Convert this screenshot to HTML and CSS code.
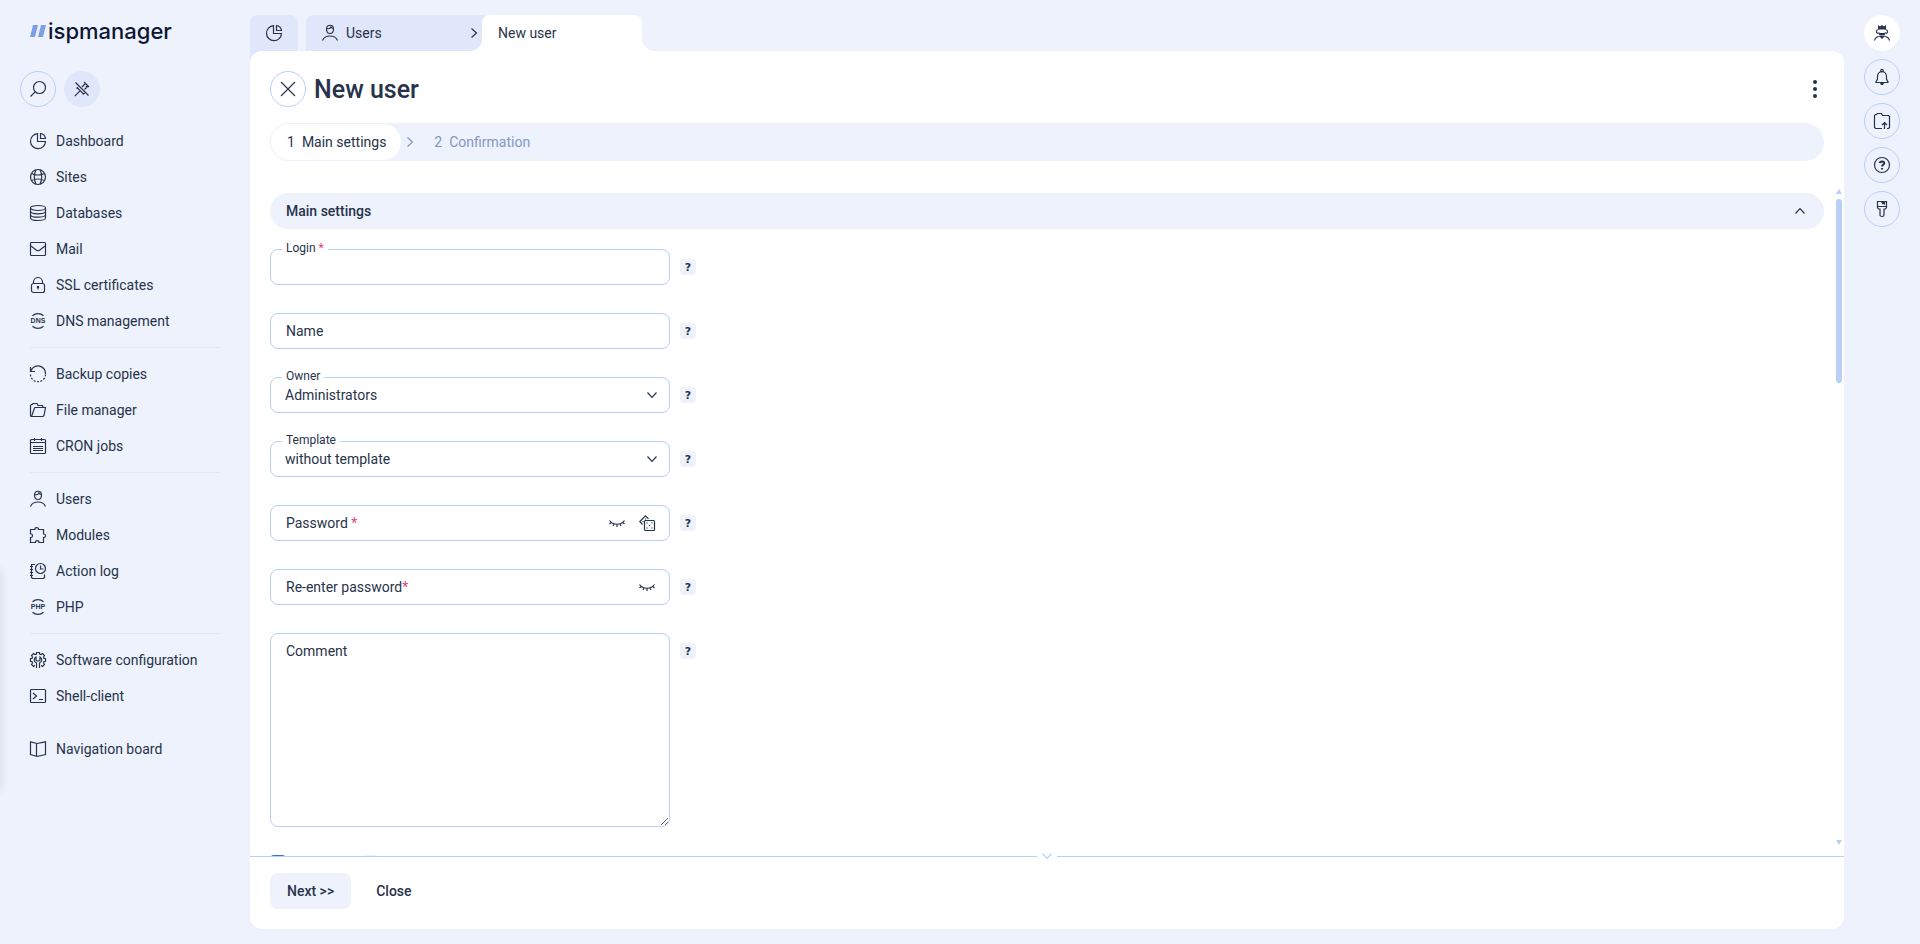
FILE: index.html
```html
<!DOCTYPE html>
<html lang="en">

<head>
  <meta charset="UTF-8" />
  <meta name="viewport" content="width=device-width, initial-scale=1.0" />
  <title>ispmanager - New user</title>
  <link rel="stylesheet" href="styles.css">
</head>

<body>
  <!-- Icon sprite -->
  <svg class="sprite" aria-hidden="true">
    <symbol id="i-search" viewBox="0 0 16 16"><circle cx="9.5" cy="6.5" r="6" /><path d="M5.2 10.8.5 15.5" /></symbol>
    <symbol id="i-unpin" viewBox="0 0 16 16"><path d="M1.5 1.5l13 13M.8 15.2l5-5M3 6.500l6.800 6.800M8 6l3-3M10.500 8.500l3-3M10 1l5 5M11.500 2.500l-1 1M13.500 4.500l-1.500 1.500M2.500 7.500L4 6.200M9 13.500l1.500-1.500" /></symbol>
    <symbol id="i-pie" viewBox="0 0 16 16"><path d="M7.500.7A7.500 7.500 0 1 0 15.500 8.500h-8z" /><path d="M10.500.5v5h5a6 6 0 0 0-5-5z" /></symbol>
    <symbol id="i-globe" viewBox="0 0 16 16"><circle cx="8" cy="8" r="7.5" /><path d="M1.500 4.500c3.500 2 9.500 2 13 0M1.500 11.500c3.500-2 9.500-2 13 0M6 .8c-2 4-2 10 0 14.400M10 .8c2 4 2 10 0 14.400" /></symbol>
    <symbol id="i-db" viewBox="0 0 16 16"><ellipse cx="8" cy="3" rx="7.5" ry="2.5" /><path d="M.5 3v10c0 1.400 3.400 2.500 7.500 2.500s7.500-1.100 7.500-2.500V3M.5 6.300c0 1.400 3.400 2.500 7.500 2.500s7.500-1.100 7.500-2.500M.5 9.700c0 1.400 3.400 2.500 7.500 2.500s7.500-1.100 7.500-2.500" /></symbol>
    <symbol id="i-mail" viewBox="0 0 16 16"><rect x=".5" y="1.500" width="15" height="13" rx="1" /><path d="M1 5l5.500 4.200q1.500 1 3 0L15 5" /></symbol>
    <symbol id="i-lock" viewBox="0 0 16 16"><rect x="1.500" y="6.500" width="13" height="9" rx="2" /><path d="M3.500 6.500V5a4.500 4.500 0 0 1 9 0v1.500M8 9.500v3M7.500 9.500h1v1h-1z" /></symbol>
    <symbol id="i-backup" viewBox="0 0 16 16"><path d="M1 4.800A7.500 7.500 0 0 1 15.500 8M.5 1v4.500H5" /><path d="M15.500 8.500A7.500 7.500 0 0 1 .5 8" stroke-dasharray="2 1.500" /></symbol>
    <symbol id="i-folder" viewBox="0 0 16 16"><path d="M2 14.500H1.500a1 1 0 0 1-1-1v-10l1-1h1l.5-1h4l1 2h4.500l.5 2" /><path d="M1.500 14.500l3-8.500.5-.5h10.500l-1.500 8-1 1z" /></symbol>
    <symbol id="i-cron" viewBox="0 0 16 16"><rect x=".5" y="1.500" width="15" height="14" rx="1" /><path d="M.5 4.500h15M4.500 0v3M11.500 0v3M3 8.500h10M3 10.500h10M3 12.500h10" /></symbol>
    <symbol id="i-user" viewBox="0 0 16 16"><path d="M4.500 4c0-5 7-5 7 0 0 6-7 6-7 0zM4.500 3.500c2 .5 4-.2 4.500-1.500.5 1 1.500 1.500 2.500 1.500M.5 15.500c2.500-6 12.500-6 15 0" /></symbol>
    <symbol id="i-puzzle" viewBox="0 0 16 16"><path d="M.5 2.500h4.500v-.700c0-1.700 3.500-1.700 3.500 0v.7h5V7h.5c2 0 2 3.500 0 3.500h-.5v5H9v-.700c0-1.700-3.500-1.700-3.500 0v.7h-5v-5h.7c1.700 0 1.700-3.500 0-3.500H.5z" /></symbol>
    <symbol id="i-log" viewBox="0 0 16 16"><circle cx="10.500" cy="5.500" r="5" /><path d="M10.500 2.500v3.500h3M5 1.500H1.500v13l1 1h11l1-1v-3M0 3.500h3M0 6.500h3M0 9.500h3M0 12.500h3" /></symbol>
    <symbol id="i-gear" viewBox="0 0 16 16"><path d="M5 13.500l-1.500 1-2-2 1-1.500-.5-1.500H.5v-3H2l.5-1.500-1-1.500 2-2L5 2.500 6.500 2V.5h3V2l1.500.5 1.500-1 2 2-1 1.500.5 1.500h1.500v3H14l-.5 1.500 1 1.500-2 2-1.500-1" /><path d="M6.500 16v-5C3.500 9.500 3.500 6.500 6 5v3l1 1h2l1-1V5c2.500 1.500 2.500 4.500-.5 6v5" /></symbol>
    <symbol id="i-shell" viewBox="0 0 16 16"><rect x=".5" y="1.500" width="15" height="13" rx="1" /><path d="M3 5L6.500 8 3 11M9 11.500h4" /></symbol>
    <symbol id="i-book" viewBox="0 0 16 16"><path d="M.5.8L7 2.500 15.500.8v12.700L7 15.500.5 13.500zM6.500 2.500v13" /></symbol>
    <symbol id="i-close" viewBox="0 0 16 16"><path d="M1 1l14 14M15 1L1 15" /></symbol>
    <symbol id="i-right" viewBox="0 0 6 10"><path d="M.5.5L5.500 5 .5 9.500" /></symbol>
    <symbol id="i-down" viewBox="0 0 10 6"><path d="M.5.5L5 5.300 9.500.5" /></symbol>
    <symbol id="i-up" viewBox="0 0 10 6"><path d="M.5 5.500L5 .7 9.500 5.500" /></symbol>
    <symbol id="i-bell" viewBox="0 0 16 16"><circle cx="8" cy="1.500" r="1.200" /><path d="M3.500 10V7.500c0-6.500 9-6.500 9 0V10l1.500 3v.5H2V13z" /><path class="fill" d="M6 14h4l-1 2H7z" /></symbol>
    <symbol id="i-upload" viewBox="0 0 16 16"><path d="M8 15.500H1.500l-1-1v-12l1-1h1l1-1h4l1 2h6l1 1v11l-1 1h-1.500M10.500 16v-6M8 12l2.500-2.500L13 12" /></symbol>
    <symbol id="i-help" viewBox="0 0 16 16"><circle cx="8" cy="8" r="7.500" /><path class="bold" d="M5.800 6.200c.2-2.500 4.500-2.300 4.400 0C10.100 7.700 8 7.800 8 9.500M8 11v1.500" /></symbol>
    <symbol id="i-brush" viewBox="0 0 16 16"><path d="M3.500.5h9v6l-1 1.500h-1.500v6c0 2-4 2-4 0V8H4.500l-1-1.500zM3.500 5.500h9M7.500.5l1 2 1-1 1 2v-3" /></symbol>
    <symbol id="i-king" viewBox="0 0 16 16"><path class="fill" d="M4 0l2 1.500L8 0l2 1.500L12 0v4.500H4z" /><path d="M4.500 4.500c-2.500 0-3 4 0 4M11.500 4.500c2.500 0 3 4 0 4M.5 15.500c1-3.500 3-4 5-4M15.500 15.500c-1-3.500-3-4-5-4" /><path class="fill" d="M4 7l2 1h4l2-1-1.500 3.500h-5zM5 11h6l-3 3z" /></symbol>
    <symbol id="i-eye" viewBox="0 0 16 16"><path d="M.5 5.500c3.500 5 11.500 5 15 0M2.500 7.500L.5 9M5 9l-1 2M8 9.500V12M11 9l1 2M13.500 7.500l2 1.500" /></symbol>
    <symbol id="i-dice" viewBox="0 0 16 16"><rect x="5.500" y="5.500" width="10" height="10" rx="1" /><path d="M3.500 9.500L.8 6.500 6.500.8l3 3" /><path d="M7.500 8h1.200M12.300 8h1.200M9.900 10.500h1.200M7.500 13h1.200M12.300 13h1.200M3.500 6.500h1.200M6 4h1.200" /></symbol>
  </svg>

  <aside class="sidebar">
    <a class="logo" href="#">
      <svg class="logo-mark" viewBox="0 0 16 12"><path d="M3 0h5L5 12H0zM11 0h5l-3 12H8z" /></svg>
      <span>ispmanager</span>
    </a>
    <div class="tools">
      <button class="round" aria-label="Search"><svg class="icon"><use href="#i-search" /></svg></button>
      <button class="round filled" aria-label="Unpin menu"><svg class="icon"><use href="#i-unpin" /></svg></button>
    </div>
    <nav>
      <ul class="menu">
        <li><a href="#"><svg class="icon"><use href="#i-pie" /></svg>Dashboard</a></li>
        <li><a href="#"><svg class="icon"><use href="#i-globe" /></svg>Sites</a></li>
        <li><a href="#"><svg class="icon"><use href="#i-db" /></svg>Databases</a></li>
        <li><a href="#"><svg class="icon"><use href="#i-mail" /></svg>Mail</a></li>
        <li><a href="#"><svg class="icon"><use href="#i-lock" /></svg>SSL certificates</a></li>
        <li><a href="#"><svg class="icon" viewBox="0 0 16 16"><path d="M2.500 2.800a8 8 0 0 1 11 0M2.500 13.200a8 8 0 0 0 11 0" /><text x="8" y="10">DNS</text></svg>DNS management</a></li>
      </ul>
      <ul class="menu">
        <li><a href="#"><svg class="icon"><use href="#i-backup" /></svg>Backup copies</a></li>
        <li><a href="#"><svg class="icon"><use href="#i-folder" /></svg>File manager</a></li>
        <li><a href="#"><svg class="icon"><use href="#i-cron" /></svg>CRON jobs</a></li>
      </ul>
      <ul class="menu">
        <li><a href="#"><svg class="icon"><use href="#i-user" /></svg>Users</a></li>
        <li><a href="#"><svg class="icon"><use href="#i-puzzle" /></svg>Modules</a></li>
        <li><a href="#"><svg class="icon"><use href="#i-log" /></svg>Action log</a></li>
        <li><a href="#"><svg class="icon" viewBox="0 0 16 16"><path d="M2.500 2.800a8 8 0 0 1 11 0M2.500 13.200a8 8 0 0 0 11 0" /><text x="8" y="10">PHP</text></svg>PHP</a></li>
      </ul>
      <ul class="menu">
        <li><a href="#"><svg class="icon"><use href="#i-gear" /></svg>Software configuration</a></li>
        <li><a href="#"><svg class="icon"><use href="#i-shell" /></svg>Shell-client</a></li>
      </ul>
      <ul class="menu no-line">
        <li><a href="#"><svg class="icon"><use href="#i-book" /></svg>Navigation board</a></li>
      </ul>
    </nav>
    <div class="edge-shadow"></div>
  </aside>

  <div class="workspace">
    <nav class="tabs">
      <a class="tab tab-home" href="#" aria-label="Dashboard"><svg class="icon"><use href="#i-pie" /></svg></a>
      <a class="tab tab-users" href="#">
        <svg class="icon"><use href="#i-user" /></svg>Users
        <svg class="chevron-right"><use href="#i-right" /></svg>
      </a>
      <a class="tab tab-active" href="#">New user</a>
    </nav>

    <main class="panel">
      <header class="panel-header">
        <button class="round" aria-label="Close form"><svg class="icon"><use href="#i-close" /></svg></button>
        <h1>New user</h1>
        <button class="kebab" aria-label="More"><span></span><span></span><span></span></button>
      </header>

      <ol class="steps">
        <li class="step current"><span>1</span>Main settings</li>
        <li class="arrow"><svg class="chevron-right"><use href="#i-right" /></svg></li>
        <li class="step"><span>2</span>Confirmation</li>
      </ol>

      <form class="form" id="userForm">
        <div class="form-body">
          <button type="button" class="section-title">Main settings<svg class="chevron-down"><use href="#i-up" /></svg></button>

          <div class="row">
            <div class="field raised">
              <input type="text" id="login" />
              <label for="login">Login <b>*</b></label>
            </div>
            <button type="button" class="hint">?</button>
          </div>
          <div class="row">
            <div class="field">
              <input type="text" id="name" />
              <label for="name">Name</label>
            </div>
            <button type="button" class="hint">?</button>
          </div>
          <div class="row">
            <div class="field raised">
              <select id="owner"><option>Administrators</option></select>
              <label for="owner">Owner</label>
              <svg class="chevron-down"><use href="#i-down" /></svg>
            </div>
            <button type="button" class="hint">?</button>
          </div>
          <div class="row">
            <div class="field raised">
              <select id="template"><option>without template</option></select>
              <label for="template">Template</label>
              <svg class="chevron-down"><use href="#i-down" /></svg>
            </div>
            <button type="button" class="hint">?</button>
          </div>
          <div class="row">
            <div class="field">
              <input type="password" id="password" />
              <label for="password">Password <b>*</b></label>
              <div class="field-actions">
                <button type="button" aria-label="Show password"><svg class="icon"><use href="#i-eye" /></svg></button>
                <button type="button" aria-label="Generate password"><svg class="icon"><use href="#i-dice" /></svg></button>
              </div>
            </div>
            <button type="button" class="hint">?</button>
          </div>
          <div class="row">
            <div class="field">
              <input type="password" id="confirm" />
              <label for="confirm">Re-enter password<b>*</b></label>
              <div class="field-actions">
                <button type="button" aria-label="Show password"><svg class="icon"><use href="#i-eye" /></svg></button>
              </div>
            </div>
            <button type="button" class="hint">?</button>
          </div>
          <div class="row">
            <div class="field">
              <textarea id="comment"></textarea>
              <label for="comment">Comment</label>
            </div>
            <button type="button" class="hint">?</button>
          </div>
          <div class="row toggles">
            <input type="checkbox" aria-label="Create WWW-domain" checked />
            <input type="checkbox" aria-label="Create mail domain" />
          </div>
        </div>
        <div class="scrollbar"><i class="up"></i><i class="thumb"></i><i class="down"></i></div>
      </form>

      <footer class="panel-footer">
        <button type="submit" form="userForm" class="btn primary">Next &gt;&gt;</button>
        <button type="button" class="btn">Close</button>
        <span class="fold"><svg class="chevron-down"><use href="#i-down" /></svg></span>
      </footer>
    </main>
  </div>

  <aside class="rail">
    <button class="round white" aria-label="Account"><svg class="icon"><use href="#i-king" /></svg></button>
    <button class="round" aria-label="Notifications"><svg class="icon"><use href="#i-bell" /></svg></button>
    <button class="round" aria-label="Uploads"><svg class="icon"><use href="#i-upload" /></svg></button>
    <button class="round" aria-label="Help"><svg class="icon"><use href="#i-help" /></svg></button>
    <button class="round" aria-label="Appearance"><svg class="icon"><use href="#i-brush" /></svg></button>
  </aside>
</body>

</html>
```
FILE: styles.css
```css
* { margin: 0; padding: 0; box-sizing: border-box; }
:root {
  --bg: #edf2fd;
  --tab: #e0e7fa;
  --line: #b9cff5;
  --text: #27334a;
  --muted: #8397c3;
}
body {
  font-family: Roboto, "Liberation Sans", sans-serif;
  font-size: 14px;
  line-height: 20px;
  color: var(--text);
  background-color: var(--bg);
  display: flex;
  height: 100vh;
  overflow: hidden;
}
a { color: inherit; text-decoration: none; }
ul, ol { list-style: none; }
button, input, select, textarea { font: inherit; color: inherit; border: none; background: none; outline: none; }
button { cursor: pointer; }
.sprite { position: absolute; width: 0; height: 0; }
svg { fill: none; stroke: currentColor; stroke-width: 1.2; flex: none; overflow: visible; }
symbol { overflow: visible; }
.icon text {
  fill: currentColor;
  stroke: none;
  font: bold 7px "Liberation Sans", sans-serif;
  text-anchor: middle;
}
symbol .bold { stroke-width: 2; }
symbol .fill { fill: currentColor; stroke: none; }
.icon { width: 16px; height: 16px; display: block; }
.chevron-right { width: 6px; height: 10px; }
.chevron-down { width: 10px; height: 6px; }

.round {
  width: 36px;
  height: 36px;
  flex: none;
  border: 1px solid var(--line);
  border-radius: 50%;
  display: flex;
  align-items: center;
  justify-content: center;
}
.round.filled { background-color: var(--tab); border-color: var(--tab); }
.round.white { background-color: white; border-color: white; }

/* Sidebar */
.sidebar { width: 250px; flex: none; position: relative; padding: 15px 20px; }
.logo {
  display: flex;
  align-items: center;
  gap: 2px;
  height: 32px;
  padding-left: 10px;
  color: #0d1733;
  font: 500 22px Inter, sans-serif;
}
.logo-mark { width: 16px; height: 12px; fill: #7f9ee8; stroke: none; }
.tools { display: flex; gap: 8px; margin: 24px 0 16px; }
.menu { padding: 0 10px; }
.menu + .menu::before {
  content: "";
  display: block;
  height: 1px;
  margin: 8px 0;
  background-color: #dfe8fa;
}
.menu.no-line::before { visibility: hidden; }
.menu a { display: flex; align-items: center; gap: 10px; height: 36px; }
.edge-shadow {
  position: absolute;
  left: -6px;
  top: 570px;
  width: 6px;
  height: 220px;
  box-shadow: 0 0 10px rgba(40, 50, 80, 0.15);
}

/* Tabs */
.workspace { flex: 1; min-width: 0; display: flex; flex-direction: column; padding: 15px 0; }
.tabs { display: flex; height: 36px; }
.tab {
  display: flex;
  align-items: center;
  height: 36px;
  border-radius: 8px 8px 0 0;
  background-color: var(--tab);
}
.tab-home { width: 48px; justify-content: center; margin-right: 8px; box-shadow: 0 12px 0 var(--tab); }
.tab-users { width: 184px; padding: 0 12px 0 16px; gap: 8px; margin-right: -8px; }
.tab-users .chevron-right { margin-left: auto; margin-right: 1px; }
.tab-active { width: 160px; padding: 0 16px; background-color: white; position: relative; }
.tab-active::before, .tab-active::after {
  content: "";
  position: absolute;
  bottom: 0;
  width: 12px;
  height: 12px;
}
.tab-active::before { right: 100%; background: radial-gradient(circle at 0 0, transparent 12px, white 12px); }
.tab-active::after { left: 100%; background: radial-gradient(circle at 100% 0, transparent 12px, white 12px); }

/* Panel */
.panel {
  flex: 1;
  min-height: 0;
  display: flex;
  flex-direction: column;
  position: relative;
  background-color: white;
  border-radius: 12px;
}
.panel-header { display: flex; align-items: center; gap: 8px; padding: 20px 20px 16px; }
.panel-header h1 { font-size: 25px; font-weight: 500; line-height: 32px; padding-top: 2px; }
.kebab { margin-left: auto; width: 18px; height: 18px; display: flex; flex-direction: column; align-items: center; justify-content: space-between; }
.kebab span { width: 4px; height: 4px; border-radius: 50%; background-color: var(--text); }
.steps {
  display: flex;
  align-items: center;
  height: 38px;
  margin: 0 20px;
  border-radius: 19px;
  background-color: var(--bg);
  color: var(--muted);
}
.step { display: flex; align-items: center; gap: 7px; height: 38px; padding: 0 16px 1px; }
.step.current { background-color: white; color: var(--text); border: 1px solid var(--bg); border-radius: 19px; padding-right: 15px; }
.arrow { display: flex; padding: 0 5px; }

/* Form */
.form { flex: 1; min-height: 0; position: relative; margin-top: 28px; }
.form-body { height: 100%; overflow: hidden; padding: 4px 20px 0; }
.section-title {
  display: flex;
  align-items: center;
  justify-content: space-between;
  width: 100%;
  height: 36px;
  padding: 0 19px 0 16px;
  margin-bottom: 20px;
  border-radius: 18px;
  background-color: var(--bg);
  font-weight: 500;
}
.row { display: flex; gap: 10px; margin-bottom: 28px; }
.field { position: relative; width: 400px; }
.field input, .field select, .field textarea {
  display: block;
  width: 100%;
  height: 36px;
  padding: 0 15px;
  border: 1px solid var(--line);
  border-radius: 8px;
  background-color: white;
  appearance: none;
}
.field select { padding: 0 14px; }
.field textarea { height: 194px; padding: 8px 15px; resize: vertical; }
.field label { position: absolute; left: 12px; top: 8px; padding: 0 4px; background-color: white; pointer-events: none; }
.field label b { font-weight: 400; color: #e0437c; }
.field.raised label { top: -8px; font-size: 12px; line-height: 14px; }
.field .chevron-down { position: absolute; right: 13px; top: 15px; pointer-events: none; }
.field-actions { position: absolute; right: 15px; top: 10px; display: flex; gap: 14px; }
.hint {
  width: 16px;
  height: 16px;
  margin-top: 10px;
  border-radius: 4px;
  background-color: var(--bg);
  font: bold 11px "DejaVu Sans", sans-serif;
}
.toggles { gap: 76px; }
.toggles input { appearance: none; width: 16px; height: 16px; border-radius: 4px; background-color: var(--bg); }
.toggles input:checked { background-color: #3372d8; }

/* Scrollbar beside the form */
.scrollbar { position: absolute; top: 0; right: 2px; bottom: 11px; width: 6px; display: flex; flex-direction: column; }
.scrollbar i { display: block; }
.scrollbar .up { border: 3px solid transparent; border-top: none; border-bottom: 5px solid var(--line); }
.scrollbar .down { border: 3px solid transparent; border-bottom: none; border-top: 5px solid var(--line); margin-top: auto; }
.scrollbar .thumb { height: 28%; margin-top: 5px; border-radius: 3px; background-color: var(--line); }

/* Footer */
.panel-footer { position: relative; display: flex; gap: 8px; padding: 16px 20px 20px; border-top: 1px solid var(--line); }
.btn { height: 36px; padding: 0 17px; border-radius: 8px; font-weight: 500; }
.btn.primary { background-color: var(--bg); }
.fold {
  position: absolute;
  top: -4px;
  left: 50%;
  width: 20px;
  height: 8px;
  margin-left: -10px;
  background-color: white;
  color: var(--line);
  display: flex;
  justify-content: center;
}

/* Right rail */
.rail { width: 76px; flex: none; padding: 15px 20px; display: flex; flex-direction: column; gap: 8px; }
```
